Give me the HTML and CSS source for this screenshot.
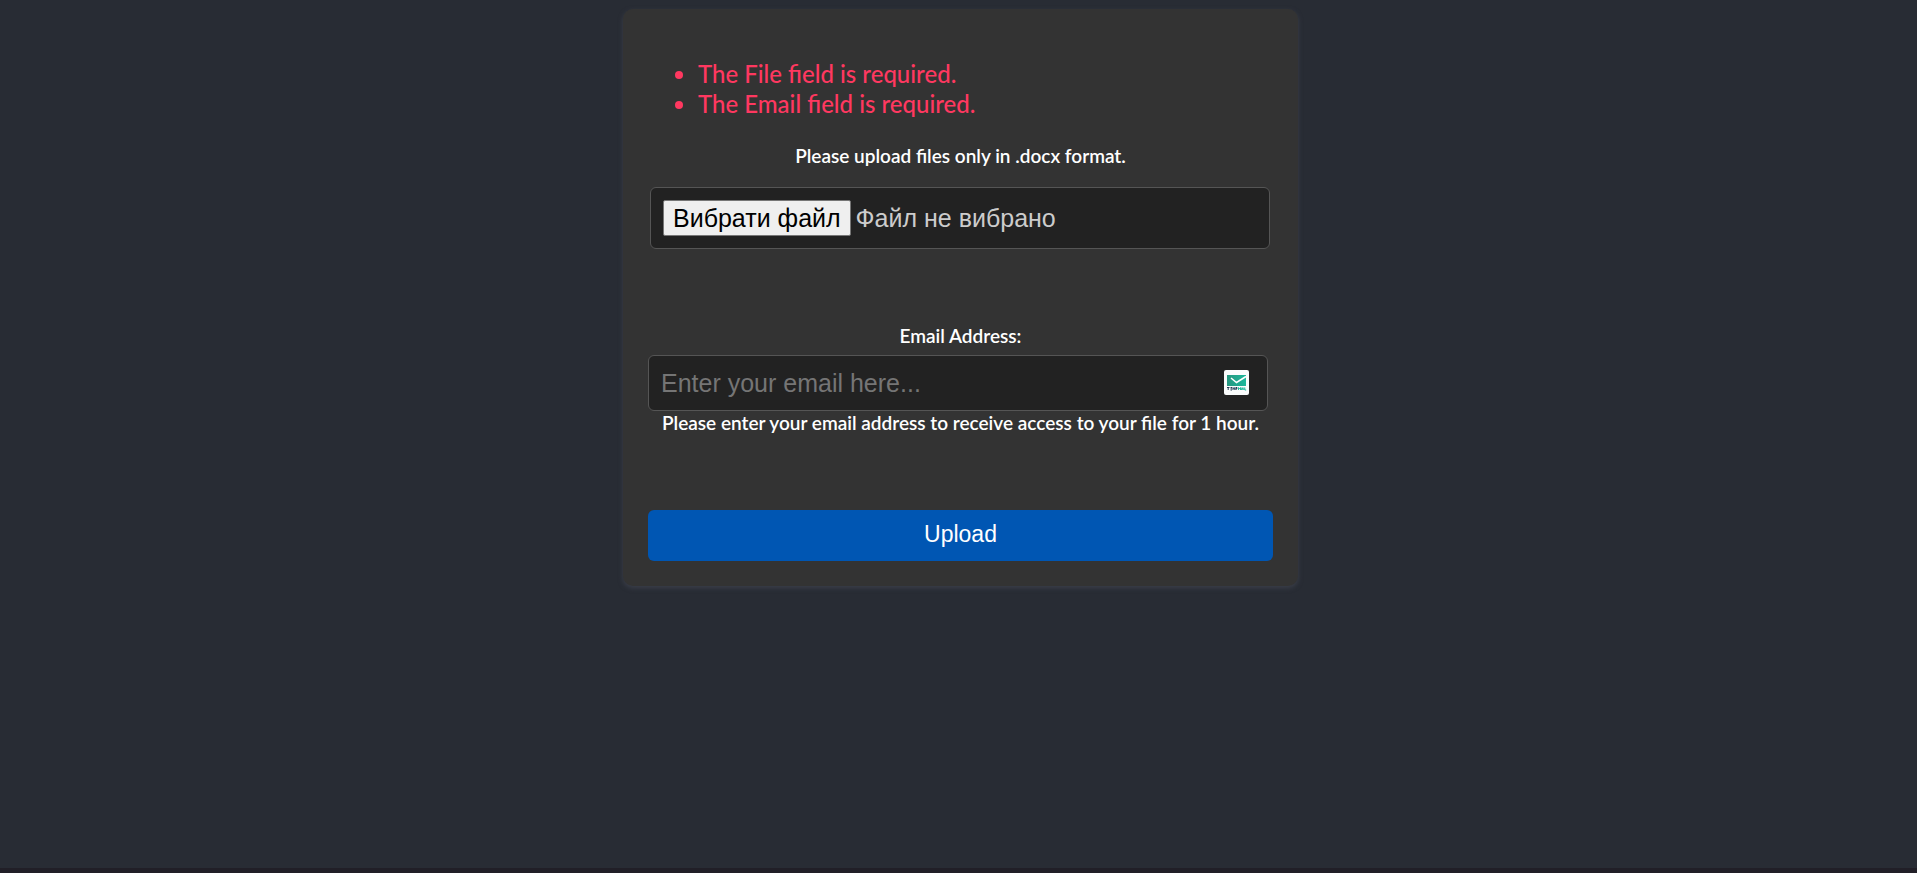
FILE: index.html
```html
<!DOCTYPE html>
<html lang="en">
<head>
<meta charset="utf-8">
<title>Upload</title>
<link rel="stylesheet" href="styles.css">
</head>
<body>
<main class="page">
  <form class="card" novalidate>
    <ul class="errors">
      <li>The File field is required.</li>
      <li>The Email field is required.</li>
    </ul>
    <div class="group">
      <label class="caption" for="file">Please upload files only in .docx format.</label>
      <div class="file-box">
        <input class="file-input" type="file" id="file" accept=".docx">
        <label class="file-button" for="file">Вибрати файл</label>
        <span class="file-name">Файл не вибрано</span>
      </div>
    </div>
    <div class="group">
      <label class="caption caption-email" for="email">Email Address:</label>
      <div class="email-wrap">
        <input class="email-input" type="email" id="email" placeholder="Enter your email here...">
        <svg class="mail-badge" viewBox="0 0 25 25" aria-hidden="true">
          <defs><linearGradient id="mint"><stop offset="0" stop-color="#26967f"/><stop offset="1" stop-color="#1cb89b"/></linearGradient></defs>
          <rect width="25" height="25" rx="2" fill="#fafcfc"/>
          <rect x="3" y="5" width="19" height="11" fill="url(#mint)"/>
          <path d="M7 8l5.500 4.500L22 6.500" fill="none" stroke="#fff" stroke-width="1.500"/>
          <path d="M3 17.500h2.500M4.200 17.500v2.500M6.500 17.500h1.500M6.500 18.800h1.500M6.500 20h1.500M9 20v-2.500l.9 1.200.9-1.200v2.500M12 20v-2.500h1v1.200h-1" fill="none" stroke="#273d55" stroke-width="1"/>
          <path d="M14.500 20v-2.500l1 1.200 1-1.200v2.500M17.300 20l.8-2.500.8 2.500M19.800 17.500v2.500M20.800 17.500v2.500h1.400" fill="none" stroke="#23b99c" stroke-width="1"/>
        </svg>
      </div>
      <p class="caption">Please enter your email address to receive access to your file for 1 hour.</p>
    </div>
    <button class="submit" type="submit">Upload</button>
  </form>
</main>
<footer class="footer"></footer>
</body>
</html>
```
FILE: styles.css
```css
* { box-sizing: border-box; }

body {
  margin: 0;
  min-height: 100vh;
  display: flex;
  flex-direction: column;
  background: #282c34;
  color: #fff;
  font-family: Lato, "Open Sans", sans-serif;
}

.page {
  flex: 1;
  padding: 9px 8px 9px 12px;
}

.card {
  max-width: 675px;
  margin: 0 auto;
  padding: 25px;
  border-radius: 10px;
  background: #333;
  box-shadow: 0 2px 5px #3b3f4a;
}

.errors {
  margin: 25px 0;
  padding-left: 50px;
  color: #ff3860;
  font-size: 24px;
  font-weight: 500;
  line-height: 30px;
}

.group { margin-bottom: 75px; }

.caption {
  display: block;
  margin: 0;
  font-size: 19px;
  font-weight: 600;
  line-height: 24px;
  text-align: center;
}

.caption-email { margin-bottom: 7px; }

.file-box {
  position: relative;
  display: flex;
  align-items: center;
  gap: 5px;
  margin: 19px 3px 0 2px;
  padding: 12px;
  border: 1px solid #555;
  border-radius: 6px;
  background: #222;
  color: #ccc;
  font: 25px "Liberation Sans", Arial, sans-serif;
}

.file-input {
  position: absolute;
  inset: 0;
  width: 100%;
  height: 100%;
  opacity: 0;
}

.file-button {
  padding: 2px 9px;
  border: 1px solid #767676;
  border-radius: 2px;
  background: #efefef;
  color: #000;
  line-height: 30px;
}

.email-wrap {
  position: relative;
  margin-right: 5px;
}

.email-input {
  display: block;
  width: 100%;
  height: 56px;
  padding: 12px;
  border: 1px solid #555;
  border-radius: 6px;
  background: #222;
  color: #ccc;
  font: 25px "Liberation Sans", Arial, sans-serif;
}

.email-input::placeholder { color: #757575; }

.mail-badge {
  position: absolute;
  top: 15px;
  right: 19px;
  width: 25px;
  height: 25px;
}

.submit {
  display: block;
  width: 100%;
  padding: 11px 12px 13px;
  border: 0;
  border-radius: 6px;
  background: #0056b3;
  color: #fff;
  font: 23px/27px "Liberation Sans", Arial, sans-serif;
}

.footer {
  height: 5px;
  background: #211f27;
}
```
